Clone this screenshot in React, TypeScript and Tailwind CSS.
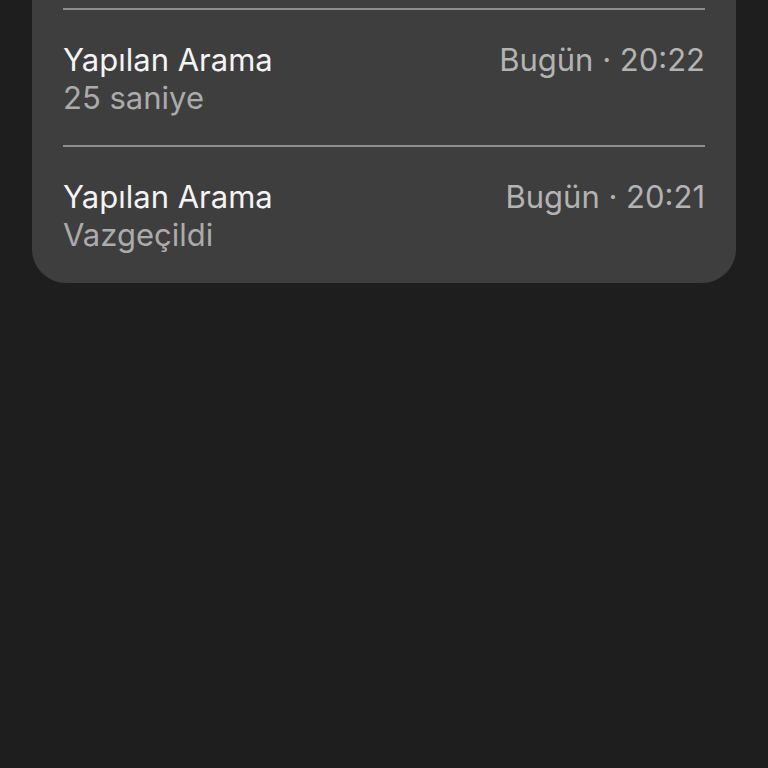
export default function App() {
  const rows = [
    { title: 'Yapılan Arama', sub: '25 saniye', time: 'Bugün · 20:22' },
    { title: 'Yapılan Arama', sub: 'Vazgeçildi', time: 'Bugün · 20:21' },
  ];

  return (
    <div
      className="h-[768px] w-[768px] overflow-hidden bg-[#1e1e1e] px-[32px]"
      style={{ fontFamily: 'Inter, "Noto Sans", sans-serif' }}
    >
      <div className="rounded-b-[34px] bg-[#3e3e3e] px-[31px] pt-[8px] pb-[29px]">
        {rows.map((row, i) => (
          <div key={i} className={i > 0 ? 'mt-[28px]' : ''}>
            <div className="h-[2px] bg-[#8c8c8c]" />
            <div className="mt-[31px] flex items-start justify-between">
              <div>
                <div className="text-[31px] leading-[38px] text-[#f4f4f4]">{row.title}</div>
                <div className="text-[31px] leading-[38px] text-[#ababab]">{row.sub}</div>
              </div>
              <div className="text-[31px] leading-[38px] text-[#b3b3b3]">{row.time}</div>
            </div>
          </div>
        ))}
      </div>
    </div>
  );
}
